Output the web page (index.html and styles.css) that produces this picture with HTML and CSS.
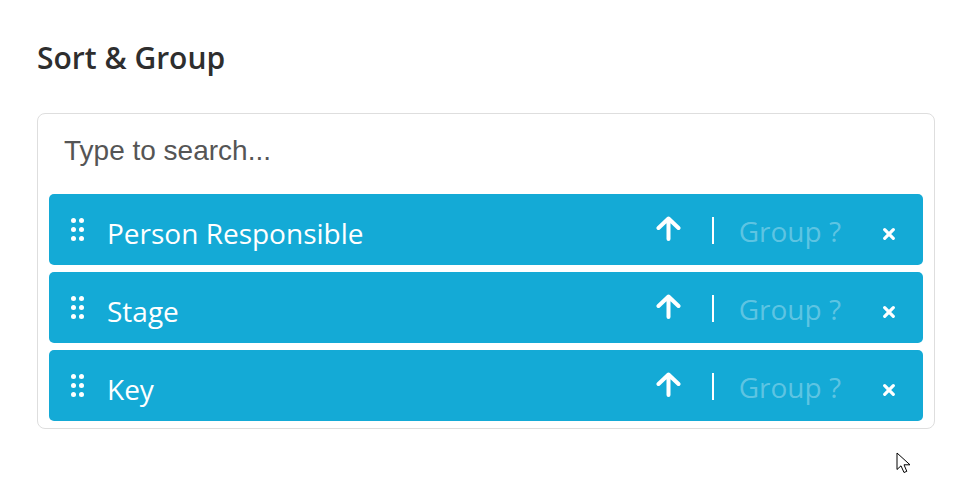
FILE: index.html
```html
<!DOCTYPE html>
<html lang="en">
<head>
  <meta charset="UTF-8">
  <title>Sort &amp; Group</title>
  <link rel="stylesheet" href="styles.css">
</head>
<body>

<h2 class="panel-title">Sort &amp; Group</h2>

<div class="sort-box">
  <input type="text" class="sort-search" placeholder="Type to search...">

  <div class="sort-list">
    <div class="sort-item">
      <svg class="drag-handle" width="13" height="23" viewBox="0 0 13 23">
        <circle cx="2.5" cy="2.5" r="2.5"/><circle cx="10.5" cy="2.5" r="2.5"/>
        <circle cx="2.5" cy="11.5" r="2.5"/><circle cx="10.5" cy="11.5" r="2.5"/>
        <circle cx="2.5" cy="20.5" r="2.5"/><circle cx="10.5" cy="20.5" r="2.5"/>
      </svg>
      <span class="item-label">Person Responsible</span>
      <svg class="sort-dir" width="25" height="25" viewBox="0 0 25 25">
        <path d="M12.5 23V2.5M2.5 12L12.5 2.5L22.5 12"/>
      </svg>
      <span class="item-sep"></span>
      <span class="item-group">Group ?</span>
      <svg class="item-remove" width="12" height="12" viewBox="0 0 12 12">
        <path d="M1.7 1.7L10.3 10.3M10.3 1.7L1.7 10.3"/>
      </svg>
    </div>

    <div class="sort-item">
      <svg class="drag-handle" width="13" height="23" viewBox="0 0 13 23">
        <circle cx="2.5" cy="2.5" r="2.5"/><circle cx="10.5" cy="2.5" r="2.5"/>
        <circle cx="2.5" cy="11.5" r="2.5"/><circle cx="10.5" cy="11.5" r="2.5"/>
        <circle cx="2.5" cy="20.5" r="2.5"/><circle cx="10.5" cy="20.5" r="2.5"/>
      </svg>
      <span class="item-label">Stage</span>
      <svg class="sort-dir" width="25" height="25" viewBox="0 0 25 25">
        <path d="M12.5 23V2.5M2.5 12L12.5 2.5L22.5 12"/>
      </svg>
      <span class="item-sep"></span>
      <span class="item-group">Group ?</span>
      <svg class="item-remove" width="12" height="12" viewBox="0 0 12 12">
        <path d="M1.7 1.7L10.3 10.3M10.3 1.7L1.7 10.3"/>
      </svg>
    </div>

    <div class="sort-item">
      <svg class="drag-handle" width="13" height="23" viewBox="0 0 13 23">
        <circle cx="2.5" cy="2.5" r="2.5"/><circle cx="10.5" cy="2.5" r="2.5"/>
        <circle cx="2.5" cy="11.5" r="2.5"/><circle cx="10.5" cy="11.5" r="2.5"/>
        <circle cx="2.5" cy="20.5" r="2.5"/><circle cx="10.5" cy="20.5" r="2.5"/>
      </svg>
      <span class="item-label">Key</span>
      <svg class="sort-dir" width="25" height="25" viewBox="0 0 25 25">
        <path d="M12.5 23V2.5M2.5 12L12.5 2.5L22.5 12"/>
      </svg>
      <span class="item-sep"></span>
      <span class="item-group">Group ?</span>
      <svg class="item-remove" width="12" height="12" viewBox="0 0 12 12">
        <path d="M1.7 1.7L10.3 10.3M10.3 1.7L1.7 10.3"/>
      </svg>
    </div>
  </div>
</div>

<!-- mouse pointer -->
<svg class="pointer" width="17" height="22" viewBox="0 0 17 22">
  <path d="M1 1V17.5L5 13.8L8 20.5L10.8 19.3L8 12.8H14Z"/>
</svg>

</body>
</html>
```

FILE: styles.css
```css
body {
  margin: 0;
  padding: 37px 23px 0 37px;
  background: #fff;
  font-family: "Open Sans", "Noto Sans", sans-serif;
}
.panel-title {
  margin: 0 0 35px;
  font-size: 30px;
  font-weight: 600;
  line-height: 41px;
  color: #2e2e2e;
}
.sort-box {
  border: 1px solid #dedede;
  border-radius: 8px;
  padding: 0 11px 7px;
}
.sort-search {
  display: block;
  box-sizing: border-box;
  width: 100%;
  height: 80px;
  margin: 0;
  padding: 0 15px 7px;
  border: none;
  outline: none;
  background: transparent;
  font-family: "Liberation Sans", Arial, sans-serif;
  font-size: 28px;
  color: #555;
}
.sort-search::placeholder {
  color: #555;
  opacity: 1;
}
.sort-list {
  display: flex;
  flex-direction: column;
  gap: 7px;
}
.sort-item {
  display: flex;
  align-items: center;
  height: 71px;
  padding: 0 28px 0 22px;
  background: #14aad6;
  border-radius: 5px;
  color: #fff;
}
.drag-handle {
  fill: #fff;
  flex-shrink: 0;
}
.item-label {
  margin-left: 23px;
  padding-top: 7px;
  font-size: 28px;
}
.sort-dir {
  margin-left: auto;
  margin-right: 31px;
  margin-top: -3px;
  fill: none;
  stroke: #fff;
  stroke-width: 4;
  stroke-linecap: round;
  stroke-linejoin: round;
}
.item-sep {
  width: 2px;
  height: 27px;
  margin-top: 2px;
  margin-right: 25px;
  background: #fff;
}
.item-group {
  padding-top: 3px;
  margin-right: 42px;
  font-size: 28px;
  color: rgba(255, 255, 255, 0.32);
}
.item-remove {
  margin-top: 9px;
  fill: none;
  stroke: #fff;
  stroke-width: 3.2;
  stroke-linecap: round;
}
.pointer {
  position: absolute;
  left: 896px;
  top: 452px;
  fill: #fff;
  stroke: #000;
  stroke-width: 1;
  stroke-linejoin: round;
}
```
